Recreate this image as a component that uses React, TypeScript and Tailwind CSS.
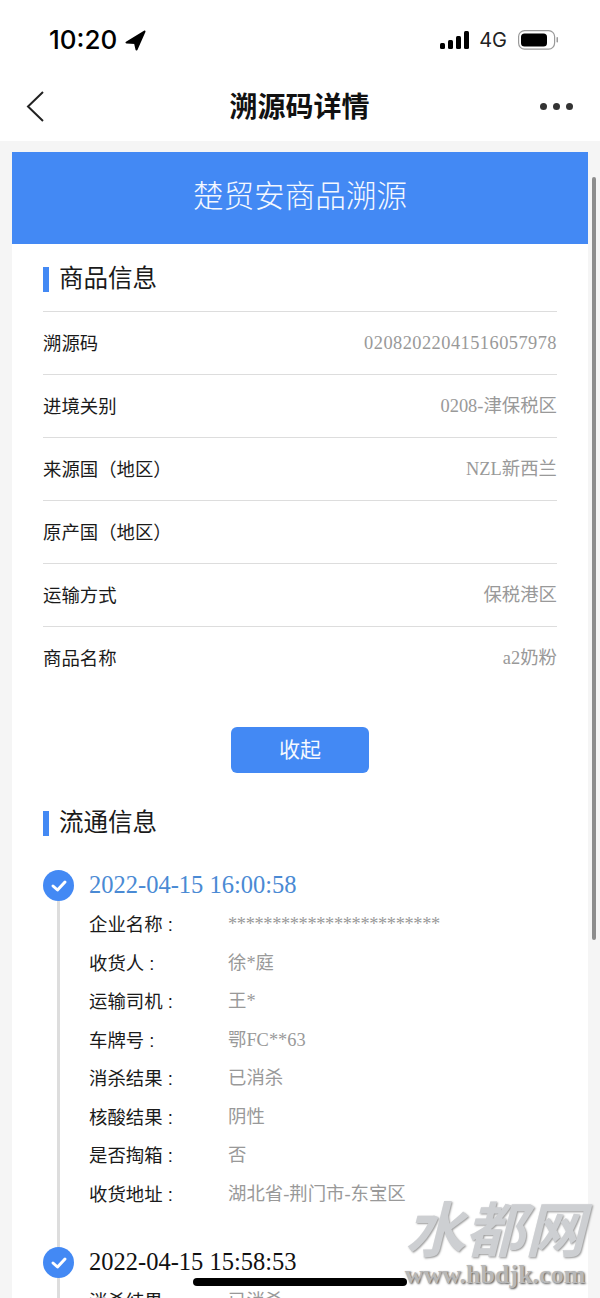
const cjk = "font-['Liberation_Sans','Noto_Sans_CJK_SC',sans-serif]";
const serif = "font-['Liberation_Serif','Noto_Sans_CJK_SC',serif]";

const goods = [
  { label: "溯源码", value: "02082022041516057978", tight: "tracking-[0.45px]" },
  { label: "进境关别", value: "0208-津保税区", tight: "" },
  { label: "来源国（地区）", value: "NZL新西兰", tight: "" },
  { label: "原产国（地区）", value: "", tight: "" },
  { label: "运输方式", value: "保税港区", tight: "" },
  { label: "商品名称", value: "a2奶粉", tight: "" },
];

const firstStop = [
  { label: "企业名称", value: "************************", tight: "tracking-[-0.37px]" },
  { label: "收货人", value: "徐*庭", tight: "" },
  { label: "运输司机", value: "王*", tight: "" },
  { label: "车牌号", value: "鄂FC**63", tight: "" },
  { label: "消杀结果", value: "已消杀", tight: "" },
  { label: "核酸结果", value: "阴性", tight: "" },
  { label: "是否掏箱", value: "否", tight: "" },
  { label: "收货地址", value: "湖北省-荆门市-东宝区", tight: "" },
];

function SectionTitle({ text }: { text: string }) {
  return (
    <div className="flex items-center gap-[10px] h-[26px]">
      <div className="w-[6px] h-[25px] bg-[#4389f4]" />
      <p className="text-[24.5px] leading-[26px] text-[#1a1a1a]">{text}</p>
    </div>
  );
}

function CheckDot() {
  return (
    <div className="w-[31px] h-[31px] rounded-full bg-[#4389f4] flex items-center justify-center shrink-0">
      <svg width="18" height="16" viewBox="0 0 18 16" fill="none">
        <path d="M3 8 L7.5 12 L15 4" stroke="white" strokeWidth="3" strokeLinecap="round" strokeLinejoin="round" />
      </svg>
    </div>
  );
}

function StatRow({ label, value, tight }: { label: string; value: string; tight?: string }) {
  return (
    <div className="flex h-[38.5px] items-center text-[18.4px]">
      <p className="w-[139px] text-[#1a1a1a]">{label} :</p>
      <p className={`${serif} ${tight} text-[#999999]`}>{value}</p>
    </div>
  );
}

export default function App() {
  return (
    <div className={`${cjk} relative w-[600px] h-[1298px] overflow-hidden bg-[#f5f5f5]`}>
      {/* status bar */}
      <div className="h-[70px] bg-white flex items-start justify-between pl-[49px] pr-[40px] pt-[25px]">
        <div className="flex items-center gap-[8px]">
          <span className="text-[26px] leading-[30px] font-medium text-black font-['Inter',sans-serif]">10:20</span>
          <svg width="21" height="21" viewBox="0 0 21 21">
            <path d="M19.5 1.5 L1.5 12.5 L10 13 L11.5 19.5 Z" fill="black" stroke="black" strokeWidth="2" strokeLinejoin="round" />
          </svg>
        </div>
        <div className="flex items-center gap-[9px] h-[30px]">
          <svg width="30" height="18" viewBox="0 0 30 18" fill="black">
            <rect x="0" y="12" width="5" height="6" rx="1.5" />
            <rect x="8" y="9" width="5" height="9" rx="1.5" />
            <rect x="16" y="5" width="5" height="13" rx="1.5" />
            <rect x="24" y="0" width="5" height="18" rx="1.5" />
          </svg>
          <span className="text-[20px] leading-[24px] text-[#222222] font-['Inter',sans-serif]">4G</span>
          <svg width="42" height="20" viewBox="0 0 42 20" className="ml-[2px]">
            <rect x="0.6" y="0.6" width="36" height="18.5" rx="6" fill="none" stroke="#9a9a9a" strokeWidth="1.2" />
            <rect x="3" y="3.5" width="26" height="13" rx="3.5" fill="black" />
            <rect x="38.5" y="7" width="1.5" height="5.5" rx="0.7" fill="#9a9a9a" />
          </svg>
        </div>
      </div>

      {/* nav bar */}
      <div className="relative h-[71px] bg-white flex items-center justify-between pl-[25px] pr-[27px]">
        <svg width="20" height="32" viewBox="0 0 20 32" fill="none">
          <path d="M18 2 L3 16.5 L18 31" stroke="#222222" strokeWidth="2" />
        </svg>
        <p className="text-[28px] font-bold leading-[36px] text-[#111111] ml-[14px] mt-[4px]">溯源码详情</p>
        <div className="flex gap-[6px] mt-[2px]">
          <div className="w-[7px] h-[7px] rounded-full bg-[#333333]" />
          <div className="w-[7px] h-[7px] rounded-full bg-[#333333]" />
          <div className="w-[7px] h-[7px] rounded-full bg-[#333333]" />
        </div>
      </div>

      {/* card */}
      <div className="mx-[12px] mt-[11px] bg-white h-[1200px]">
        <div className="h-[92px] bg-[#4389f4] flex items-center justify-center">
          <p className="text-[30.6px] font-light text-[#f4f8ff] -mt-[2px]">楚贸安商品溯源</p>
        </div>

        <div className="px-[31px]">
          <div className="pt-[22px]">
            <SectionTitle text="商品信息" />
          </div>
          <div className="mt-[19px]">
            {goods.map((row) => (
              <div key={row.label} className="h-[63px] pt-[2px] border-t border-[#dddddd] flex items-center justify-between text-[18.4px]">
                <p className="text-[#1a1a1a]">{row.label}</p>
                <p className={`${serif} ${row.tight} text-[#999999]`}>{row.value}</p>
              </div>
            ))}
          </div>

          <div className="mt-[38px] flex justify-center">
            <button className="w-[138px] h-[46px] rounded-[6px] bg-[#4389f4] text-[#f4f8ff] text-[21px]">收起</button>
          </div>

          <div className="mt-[37px]">
            <SectionTitle text="流通信息" />
          </div>

          <div className="mt-[34px] relative">
            <div className="absolute left-[14px] top-[20px] w-[3px] h-[500px] bg-[#dddddd]" />
            <div className="relative flex items-center gap-[15px] h-[31px]">
              <CheckDot />
              <p className={`${serif} text-[24.5px] text-[#4a8ad4]`}>2022-04-15 16:00:58</p>
            </div>
            <div className="pl-[46px] mt-[5px]">
              {firstStop.map((row) => (
                <StatRow key={row.label} label={row.label} value={row.value} tight={row.tight} />
              ))}
            </div>
            <div className="relative flex items-center gap-[15px] h-[31px] mt-[33px]">
              <CheckDot />
              <p className={`${serif} text-[24.5px] text-[#111111]`}>2022-04-15 15:58:53</p>
            </div>
            <div className="pl-[46px] mt-[5px]">
              <StatRow label="消杀结果" value="已消杀" />
            </div>
          </div>
        </div>
      </div>

      {/* scrollbar */}
      <div className="absolute left-[592px] top-[177px] w-[4px] h-[763px] rounded-full bg-[#8d8d8d]" />

      {/* home indicator */}
      <div className="absolute left-[193px] top-[1278px] w-[214px] h-[8px] rounded-full bg-black" />

      {/* watermark */}
      <div className="absolute left-[400px] top-[1190px] w-[190px] text-center pointer-events-none">
        <p className="font-['Noto_Sans_CJK_SC',serif] font-bold italic text-[60px] leading-[72px] text-[#cdcfd2] [text-shadow:1px_1px_2px_#999999]">水都网</p>
        <p className={`${serif} font-bold text-[26px] leading-[26px] text-[#b8b8b8] [text-shadow:1px_1px_2px_#555555]`}>www.hbdjk.com</p>
      </div>
    </div>
  );
}
